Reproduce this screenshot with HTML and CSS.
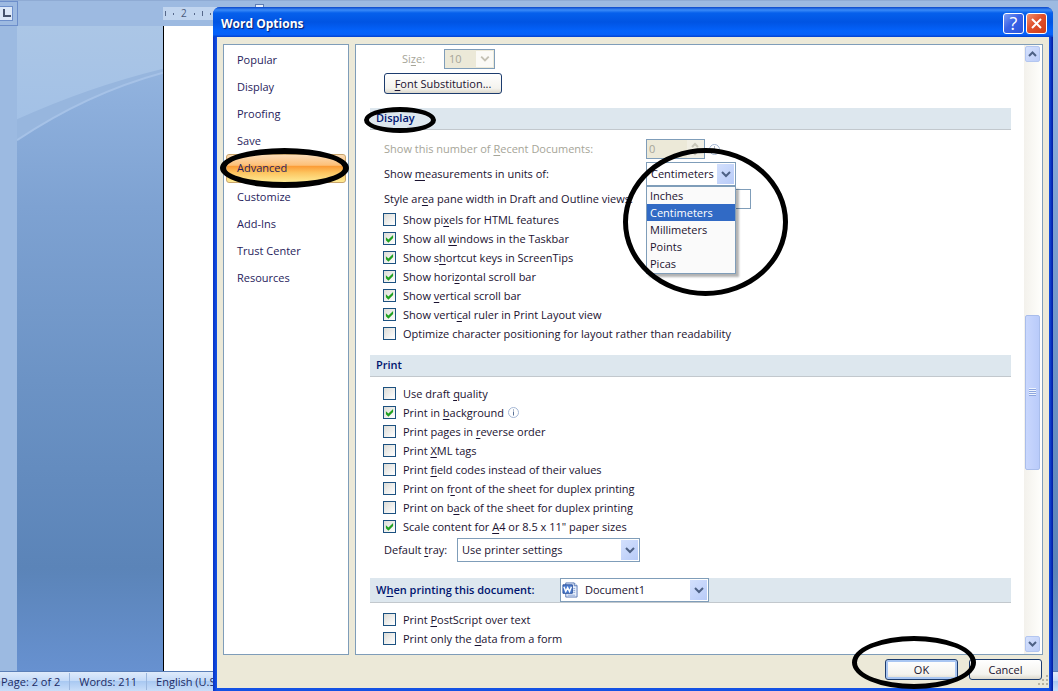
FILE: index.html
```html
<!DOCTYPE html>
<html lang="en">
<head>
    <meta charset="UTF-8">
    <meta name="viewport" content="width=device-width, initial-scale=1.0">
    <title>Word Options</title>
    <link rel="stylesheet" href="styles.css">
</head>
<body>
    <div class="app">
        <div class="top-ruler">
            <div class="tab-corner"><span class="tab-stop"></span></div>
            <div class="ruler-scale"><i></i><i class="dot"></i><span>2</span><i class="dot"></i><i></i><i class="dot"></i></div>
            <span class="indent-marker"></span>
        </div>
        <div class="workspace">
            <div class="side-ruler"></div>
            <div class="canvas">
                <svg class="swoosh" viewBox="0 0 147 118" aria-hidden="true">
                    <defs>
                        <linearGradient id="sky" x1="0" y1="0" x2="0" y2="1">
                            <stop offset="0" stop-color="#abc6e6"/>
                            <stop offset="1" stop-color="#a3c1e6"/>
                        </linearGradient>
                    </defs>
                    <path d="M0 0H147V47Q70 68 0 115Z" fill="#97b6de"/>
                    <path d="M0 0H147V43Q70 62 0 94Z" fill="url(#sky)"/>
                    <path d="M0 115Q70 68 147 47" fill="none" stroke="#a6c2e7" stroke-width="2"/>
                </svg>
            </div>
            <div class="page"></div>
            <div class="canvas canvas-right"></div>
        </div>
        <div class="status-bar">
            <span>Page: 2 of 2</span>
            <span>Words: 211</span>
            <span>English (U.S.)</span>
        </div>
    </div>

    <div class="dialog" role="dialog" aria-labelledby="dialog-title">
        <div class="title-bar">
            <h1 id="dialog-title">Word Options</h1>
            <button class="title-button help" aria-label="Help">?</button>
            <button class="title-button close" aria-label="Close">
                <svg width="13" height="13" viewBox="0 0 13 13"><path d="M2 2L11 11M11 2L2 11" stroke="#fff" stroke-width="2"/></svg>
            </button>
        </div>

        <div class="dialog-main">
            <nav class="sidebar">
                <a href="#">Popular</a>
                <a href="#">Display</a>
                <a href="#">Proofing</a>
                <a href="#">Save</a>
                <a href="#" class="active">Advanced<span class="circle circle-advanced"></span></a>
                <a href="#">Customize</a>
                <a href="#">Add-Ins</a>
                <a href="#">Trust Center</a>
                <a href="#">Resources</a>
            </nav>

            <div class="pane">
                <div class="options">
                    <div class="field size-field disabled">
                        <label for="size">Si<u>z</u>e:</label>
                        <span class="select small">
                            <select id="size" disabled><option>10</option></select>
                            <svg class="arrow" viewBox="0 0 17 17"><path d="M5 6L9 10L13 6" fill="none" stroke="#c4c1b4" stroke-width="2"/></svg>
                        </span>
                    </div>
                    <button class="button wide"><u>F</u>ont Substitution...</button>

                    <h2 class="section"><span>Display<span class="circle circle-display"></span></span></h2>
                    <div class="display-fields">
                        <div class="field disabled">
                            <label for="recent">Show this number of <u>R</u>ecent Documents:</label>
                            <span class="spinner">
                                <input id="recent" type="text" value="0" disabled>
                                <svg viewBox="0 0 17 18" aria-hidden="true"><path d="M0 0H17V18H0Z" fill="#f1efe4"/><path d="M5 7L8 4L11 7M5 11L8 14L11 11" fill="none" stroke="#c9c7ba" stroke-width="2"/></svg>
                            </span>
                            <svg class="info" viewBox="0 0 11 11"><circle cx="5.5" cy="5.5" r="5" fill="#fff" stroke="#a3b6d4"/><path d="M5.500 2.500V3.500M5.500 4.500V8.500" stroke="#5a7297"/></svg>
                        </div>
                        <div class="field">
                            <label for="units">Show <u>m</u>easurements in units of:</label>
                            <span class="select units">
                                <select id="units"><option>Centimeters</option></select>
                                <svg class="arrow" viewBox="0 0 17 20"><path d="M5 8L9 12L13 8" fill="none" stroke="#4d6185" stroke-width="2"/></svg>
                                <ul class="menu" role="listbox" aria-label="Units">
                                    <li role="option">Inches</li>
                                    <li role="option" class="selected" aria-selected="true">Centimeters</li>
                                    <li role="option">Millimeters</li>
                                    <li role="option">Points</li>
                                    <li role="option">Picas</li>
                                </ul>
                                <span class="circle circle-units"></span>
                            </span>
                        </div>
                        <div class="field">
                            <label for="style-area">Style ar<u>e</u>a pane width in Draft and Outline views:</label>
                            <input id="style-area" class="text-box" type="text">
                        </div>
                    </div>
                    <label class="check"><input type="checkbox"><span>Show pi<u>x</u>els for HTML features</span></label>
                    <label class="check"><input type="checkbox" checked><span>Show all <u>w</u>indows in the Taskbar</span></label>
                    <label class="check"><input type="checkbox" checked><span>Show s<u>h</u>ortcut keys in ScreenTips</span></label>
                    <label class="check"><input type="checkbox" checked><span>Show hori<u>z</u>ontal scroll bar</span></label>
                    <label class="check"><input type="checkbox" checked><span>Show <u>v</u>ertical scroll bar</span></label>
                    <label class="check"><input type="checkbox" checked><span>Show verti<u>c</u>al ruler in Print Layout view</span></label>
                    <label class="check"><input type="checkbox"><span>Optimize character positioning for layout rather than readability</span></label>

                    <h2 class="section">Print</h2>
                    <label class="check"><input type="checkbox"><span>Use draft <u>q</u>uality</span></label>
                    <label class="check"><input type="checkbox" checked><span>Print in <u>b</u>ackground</span>
                        <svg class="info" viewBox="0 0 11 11"><circle cx="5.5" cy="5.5" r="5" fill="#fff" stroke="#a3b6d4"/><path d="M5.500 2.500V3.500M5.500 4.500V8.500" stroke="#5a7297"/></svg>
                    </label>
                    <label class="check"><input type="checkbox"><span>Print pages in <u>r</u>everse order</span></label>
                    <label class="check"><input type="checkbox"><span>Print <u>X</u>ML tags</span></label>
                    <label class="check"><input type="checkbox"><span>Print <u>f</u>ield codes instead of their values</span></label>
                    <label class="check"><input type="checkbox"><span>Print on f<u>r</u>ont of the sheet for duplex printing</span></label>
                    <label class="check"><input type="checkbox"><span>Print on b<u>a</u>ck of the sheet for duplex printing</span></label>
                    <label class="check"><input type="checkbox" checked><span>Scale content for <u>A</u>4 or 8.5 x 11" paper sizes</span></label>
                    <div class="field tray-field">
                        <label for="tray">Default <u>t</u>ray:</label>
                        <span class="select tray">
                            <select id="tray"><option>Use printer settings</option></select>
                            <svg class="arrow" viewBox="0 0 17 20"><path d="M5 8L9 12L13 8" fill="none" stroke="#4d6185" stroke-width="2"/></svg>
                        </span>
                    </div>

                    <div class="section document-section">
                        <label for="document">W<u>h</u>en printing this document:</label>
                        <span class="select document">
                            <svg class="word-icon" viewBox="0 0 17 17" aria-hidden="true">
                                <path d="M4 1H13L16 4V16H4Z" fill="#e9f0fb" stroke="#5878b4"/>
                                <path d="M13 1V4H16" fill="#dbe6f8" stroke="#5878b4"/>
                                <path d="M6 14H14M12 7H14M12 9H14M12 11H14" stroke="#8aa5d6"/>
                                <path d="M1 3H11V12H1Z" fill="#4f7fd0" stroke="#2a4f9a"/>
                                <path d="M2 5L4 10L6 6L8 10L10 5" fill="none" stroke="#fff" stroke-width="1.500"/>
                            </svg>
                            <select id="document"><option>Document1</option></select>
                            <svg class="arrow" viewBox="0 0 17 20"><path d="M5 8L9 12L13 8" fill="none" stroke="#4d6185" stroke-width="2"/></svg>
                        </span>
                    </div>
                    <label class="check"><input type="checkbox"><span>Print <u>P</u>ostScript over text</span></label>
                    <label class="check"><input type="checkbox"><span>Print only the <u>d</u>ata from a form</span></label>
                </div>

                <div class="scrollbar">
                    <button class="scroll-button" aria-label="Scroll up"><svg viewBox="0 0 13 14"><path d="M3 9L6.500 5.500L10 9" fill="none" stroke="#4d6185" stroke-width="2"/></svg></button>
                    <div class="track"><div class="thumb"><i></i></div></div>
                    <button class="scroll-button" aria-label="Scroll down"><svg viewBox="0 0 13 14"><path d="M3 5L6.500 8.500L10 5" fill="none" stroke="#4d6185" stroke-width="2"/></svg></button>
                </div>
            </div>
        </div>

        <div class="dialog-footer">
            <div class="ok-wrap">
                <button class="button default">OK</button>
                <span class="circle circle-ok"></span>
            </div>
            <button class="button">Cancel</button>
            <svg class="grip" viewBox="0 0 11 11" aria-hidden="true"><path d="M8 0h2v2h-2zM4 4h2v2h-2zM8 4h2v2h-2zM0 8h2v2h-2zM4 8h2v2h-2zM8 8h2v2h-2z" fill="#b8b4a2"/></svg>
        </div>
    </div>
</body>
</html>
```
FILE: styles.css
```css
:root {
    --face: #ece9d8;
    --line: #7f9db9;
    --text-color: #1a1230;
    --heading: #00156e;
}
* {
    box-sizing: border-box;
}
body {
    margin: 0;
    height: 100vh;
    position: relative;
    overflow: hidden;
    font-family: "Open Sans", "Noto Sans", sans-serif;
    font-size: 11px;
    line-height: 17px;
    color: var(--text-color);
}
button, input, select {
    font: inherit;
    color: inherit;
    margin: 0;
}
u {
    text-underline-offset: 2px;
}

/* document window behind the dialog */
.app {
    height: 100%;
    display: flex;
    flex-direction: column;
    background: #9ebbe2;
}
.top-ruler {
    height: 26px;
    display: flex;
    background: #9dbae1;
    border-top: 1px solid #8fabd4;
}
.tab-corner {
    width: 18px;
    height: 25px;
    margin-right: 145px;
    padding: 4px 4px 4px 0;
    border: 1px solid #6d8fcb;
    border-left: 0;
}
.tab-stop {
    display: block;
    height: 15px;
    background: #dce8f8;
    border: 1px solid #6d8fcb;
    border-left: 0;
    position: relative;
}
.tab-stop::after {
    content: "";
    position: absolute;
    left: 3px;
    bottom: 3px;
    width: 6px;
    height: 6px;
    border-left: 2px solid #46536c;
    border-bottom: 2px solid #46536c;
}
.ruler-scale {
    width: 90px;
    height: 13px;
    margin-top: 6px;
    padding-left: 2px;
    display: flex;
    align-items: center;
    gap: 7px;
    background: #c1d5ef;
    color: #4a5a7a;
    font-size: 10px;
}
.ruler-scale i {
    width: 1px;
    height: 5px;
    background: #56688a;
}
.ruler-scale .dot {
    height: 2px;
}
.indent-marker {
    width: 9px;
    height: 8px;
    margin: 3px 0 0 2px;
    background: #e8f0fb;
    border: 1px solid #5f7eb5;
}
.workspace {
    flex: 1;
    display: flex;
    min-height: 0;
}
.side-ruler {
    width: 17px;
    background: #9cbae1;
}
.canvas {
    width: 146px;
    background: linear-gradient(#9bbae2, #8dafdc 12%, #7ea2d2 28%, #6c93c5 55%, #5b84b8 84%, #6791d0);
}
.canvas-right {
    width: 30px;
}
.swoosh {
    display: block;
    width: 100%;
}
.page {
    flex: 1;
    background: #fff;
    border-left: 1px solid #000;
}
.status-bar {
    height: 20px;
    display: flex;
    align-items: center;
    background: linear-gradient(#dfebfb, #c5dbf8 45%, #a9c9f2 50%, #c9def9);
    border-top: 1px solid #5a7fb8;
    color: #1c2b64;
}
.status-bar span {
    padding: 0 9px;
    border-right: 1px solid #9bb7de;
}
.status-bar span:first-child {
    padding-left: 1px;
}

/* dialog */
.dialog {
    position: absolute;
    inset: 7px 5px 0 213px;
    display: flex;
    flex-direction: column;
    padding: 0 4px 3px;
    background: linear-gradient(90deg, #0833c8, #1452e4 4px, #1452e4 calc(100% - 4px), #0018a0);
    border-radius: 7px 7px 0 0;
}
.title-bar {
    height: 30px;
    flex: none;
    margin: 0 -4px;
    padding: 3px 6px 0 8px;
    display: flex;
    align-items: center;
    gap: 2px;
    background: linear-gradient(#0a46c8, #3a8bf8 10%, #0660ec 20%, #0054e3 50%, #0462fb 80%, #0660f8 92%, #0340cc);
    border-radius: 7px 7px 0 0;
}
.title-bar h1 {
    flex: 1;
    margin: 0;
    font-size: 12px;
    color: #fff;
    text-shadow: 1px 1px 1px #0a1c6e;
}
.title-button {
    width: 21px;
    height: 21px;
    padding: 0;
    display: grid;
    place-items: center;
    border: 1px solid #fff;
    border-radius: 3px;
    color: #fff;
    font-size: 18px;
}
.help {
    background: linear-gradient(135deg, #7d9df5, #3a63e6 45%, #2a55dc);
}
.close {
    background: linear-gradient(135deg, #f0906e, #e0502c 45%, #cf3d18);
}
.dialog-main {
    flex: 1;
    min-height: 0;
    display: flex;
    gap: 6px;
    padding: 7px 6px 0;
    background: var(--face);
}
.sidebar {
    width: 126px;
    padding: 1px 2px;
    background: #fff;
    border: 1px solid var(--line);
}
.sidebar a {
    display: block;
    height: 27px;
    padding-left: 11px;
    line-height: 27px;
    color: #271c5c;
    text-decoration: none;
}
.sidebar .active {
    position: relative;
    height: 29px;
    border: 1px solid #c9a56c;
    border-radius: 3px;
    padding-left: 10px;
    line-height: 25px;
    background: linear-gradient(#fbdbb5, #fdc078 38%, #fb9c36 42%, #fdc45f 65%, #feea94);
}
.pane {
    flex: 1;
    min-width: 0;
    display: flex;
    background: #fff;
    border: 1px solid var(--line);
    overflow: hidden;
}
.options {
    flex: 1;
    padding: 4px 13px 0 14px;
}
.field {
    height: 24px;
    margin-left: 14px;
    display: flex;
    align-items: center;
}
.field label {
    padding-bottom: 2px;
}
.disabled {
    color: #a6a598;
}
.size-field {
    height: 20px;
    margin: 0 0 4px 32px;
}
.size-field label {
    width: 42px;
}
.button {
    width: 73px;
    height: 21px;
    padding: 0;
    border: 1px solid #1c3c6e;
    border-radius: 3px;
    background: linear-gradient(#fff, #f4f3ee 75%, #dcd8cc);
}
.wide {
    display: block;
    width: 118px;
    margin-left: 14px;
}
.default {
    box-shadow: inset 0 0 0 2px #a9c6f2;
}
.section {
    height: 22px;
    margin: 11px 0 8px;
    padding: 0 0 2px 6px;
    display: flex;
    align-items: center;
    background: #dde7ee;
    border-bottom: 1px solid #c2c8cd;
    font-size: 11px;
    font-weight: 600;
    color: var(--heading);
}
.wide + .section {
    margin: 14px 0 7px;
}
.section > span {
    position: relative;
}
.display-fields {
    display: grid;
    gap: 1px;
}
.display-fields label {
    width: 262px;
}
.select {
    position: relative;
    display: block;
    height: 24px;
}
.select select {
    width: 100%;
    height: 100%;
    padding: 0 20px 2px 4px;
    appearance: none;
    background: #fff;
    border: 1px solid var(--line);
    border-radius: 0;
}
.arrow {
    position: absolute;
    top: 2px;
    right: 2px;
    width: 17px;
    height: 20px;
    background: linear-gradient(135deg, #d3e0fd, #b8cbf8);
    pointer-events: none;
}
.small {
    width: 51px;
    height: 20px;
}
.select.small select {
    background: var(--face);
    opacity: 1;
}
.small .arrow {
    height: 16px;
    background: #fbfaf6;
}
.units {
    width: 90px;
}
.tray {
    width: 183px;
}
.spinner {
    display: flex;
    width: 59px;
    height: 20px;
    margin-right: 4px;
    border: 1px solid var(--line);
    background: var(--face);
}
.spinner input {
    width: 40px;
    padding: 0 2px 2px;
    border: 0;
    background: var(--face);
}
.spinner svg {
    width: 17px;
    height: 18px;
}
.text-box {
    width: 105px;
    height: 20px;
    border: 1px solid var(--line);
}
.info {
    width: 11px;
    height: 11px;
    flex: none;
}
.menu {
    position: absolute;
    z-index: 1;
    top: 24px;
    left: 0;
    width: 100%;
    margin: 0;
    padding: 0 0 1px;
    list-style: none;
    background: #fafafa;
    border: 1px solid var(--line);
    box-shadow: 3px 3px 2px rgba(0, 0, 0, 0.3);
}
.menu li {
    padding-left: 3px;
}
.menu .selected {
    background: #316ac5;
    color: #fff;
}
.check {
    height: 19px;
    margin-left: 13px;
    padding-bottom: 2px;
    display: flex;
    align-items: center;
}
.check input {
    appearance: none;
    position: relative;
    width: 13px;
    height: 13px;
    margin-right: 7px;
    border: 1px solid #1c5180;
    background: linear-gradient(135deg, #dcdcd7, #fff);
}
.check input:checked::after {
    content: "";
    position: absolute;
    inset: 1px;
    background: #21a121;
    clip-path: polygon(10% 35%, 38% 60%, 90% 10%, 90% 45%, 38% 98%, 10% 70%);
}
.check .info {
    margin-left: 4px;
}
.tray-field {
    margin-top: 1px;
}
.tray-field label {
    width: 73px;
}
.document-section {
    height: 25px;
    margin: 16px 0 8px;
    align-items: flex-start;
}
.document-section label {
    width: 184px;
    line-height: 24px;
}
.document {
    width: 149px;
    font-weight: 400;
    color: var(--text-color);
}
.document select {
    padding-left: 24px;
}
.word-icon {
    position: absolute;
    z-index: 1;
    top: 4px;
    left: 2px;
    width: 16px;
    height: 16px;
}
.scrollbar {
    width: 17px;
    margin-right: 1px;
    display: flex;
    flex-direction: column;
    padding: 1px 1px 2px;
    background: linear-gradient(90deg, #f3f1ec, #fefefb);
}
.scroll-button {
    width: 15px;
    height: 16px;
    padding: 0;
    border: 1px solid #b3c6f0;
    border-radius: 2px;
    background: linear-gradient(135deg, #d5e1fd, #bccdf8);
}
.scroll-button svg {
    display: block;
    width: 13px;
    height: 14px;
}
.track {
    flex: 1;
    display: grid;
    grid-template-rows: 44fr 27fr 29fr;
}
.thumb {
    grid-row: 2;
    display: grid;
    place-items: center;
    border: 1px solid #a9bdeb;
    border-radius: 2px;
    background: linear-gradient(90deg, #c9d7fd, #b9cbfa);
}
.thumb i {
    width: 7px;
    height: 8px;
    background: repeating-linear-gradient(#eef4fe 0 1px, #8ca5de 1px 2px);
}
.dialog-footer {
    flex: none;
    position: relative;
    height: 33px;
    padding: 4px 7px 0;
    display: flex;
    justify-content: flex-end;
    gap: 11px;
    background: var(--face);
}
.ok-wrap {
    position: relative;
    height: 21px;
}
.grip {
    position: absolute;
    right: 0;
    bottom: 2px;
    width: 11px;
    height: 11px;
}

/* hand drawn circles */
.circle {
    position: absolute;
    z-index: 2;
    border: 5px solid #000;
    border-radius: 50%;
    pointer-events: none;
}
.circle-advanced {
    inset: -7px -4px -6px -7px;
    border-width: 6px;
}
.circle-display {
    top: -2px;
    left: -12px;
    width: 72px;
    height: 26px;
}
.circle-units {
    top: -14px;
    left: -23px;
    width: 165px;
    height: 148px;
}
.circle-ok {
    top: -23px;
    left: -33px;
    width: 124px;
    height: 53px;
}
```
